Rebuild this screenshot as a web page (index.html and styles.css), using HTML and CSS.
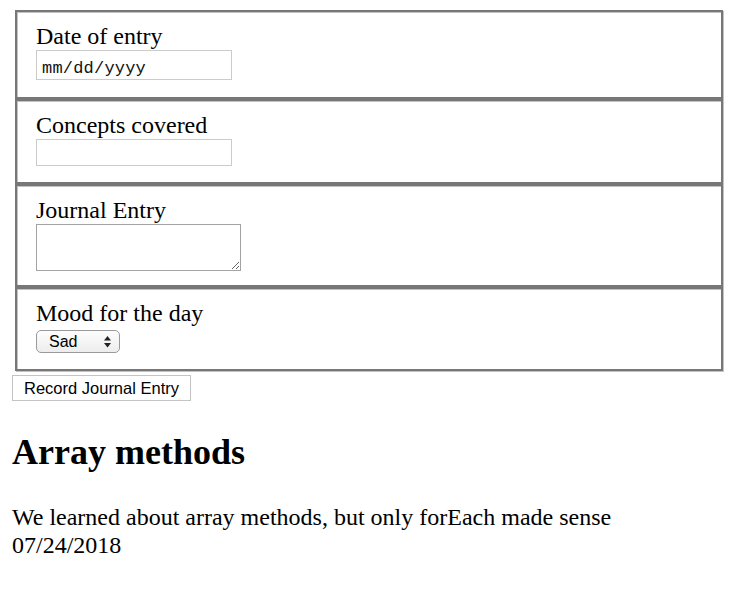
FILE: index.html
```html
<!DOCTYPE html>
<html lang="en">
<head>
<meta charset="utf-8">
<title>Journal</title>
<link rel="stylesheet" href="styles.css">
</head>
<body>
<main class="page">
  <form class="journal">
    <fieldset class="field field-date">
      <label class="field-label" for="entry-date">Date of entry</label>
      <input id="entry-date" class="input input-date" type="text" placeholder="mm/dd/yyyy">
    </fieldset>
    <fieldset class="field">
      <label class="field-label" for="concepts">Concepts covered</label>
      <input id="concepts" class="input input-text" type="text">
    </fieldset>
    <fieldset class="field field-journal">
      <label class="field-label" for="journal-entry">Journal Entry</label>
      <textarea id="journal-entry" class="textarea"></textarea>
    </fieldset>
    <fieldset class="field">
      <label class="field-label" for="mood">Mood for the day</label>
      <span class="select-wrap">
        <select id="mood" class="select">
          <option>Sad</option>
          <option>Happy</option>
          <option>Tired</option>
        </select>
        <svg class="select-arrows" width="7" height="12" viewBox="0 0 7 12" aria-hidden="true">
          <path d="M3.5 0 L7 4.5 L0 4.5 Z" fill="#222"/>
          <path d="M0 7 L7 7 L3.5 11.5 Z" fill="#222"/>
        </svg>
      </span>
    </fieldset>
    <button class="record-btn" type="button">Record Journal Entry</button>
  </form>
  <section class="entries">
    <h2 class="entry-title">Array methods</h2>
    <p class="entry-body">We learned about array methods, but only forEach made sense<br>07/24/2018</p>
  </section>
</main>
</body>
</html>
```

FILE: styles.css
```css
html, body {
  margin: 0;
  padding: 0;
  background: #fff;
}

.page {
  padding: 10px 12px 0;
  font-family: "Liberation Serif", "Times New Roman", serif;
  font-size: 24px;
  color: #000;
}

.journal {
  margin: 0;
}

.field {
  display: flex;
  flex-direction: column;
  align-items: flex-start;
  margin: 0 3px;
  padding: 10px 19px 16px;
  min-width: 0;
  border: 2px solid #777;
  box-shadow: inset 1px 1px 0 #c2c2c2, 1px 1px 0 #c2c2c2;
}

.field-date {
  padding-bottom: 17px;
}

.field-journal {
  padding-bottom: 14px;
}

.field-label {
  display: block;
  line-height: 28px;
  font-size: 24px;
}

.input {
  box-sizing: border-box;
  width: 196px;
  margin: 0;
  border: 1px solid #cbcbcb;
  background: #fff;
  outline: none;
}

.input-date {
  height: 30px;
  padding: 6px 4px 0 5px;
  font-family: "Liberation Mono", "Courier New", monospace;
  font-size: 17px;
  letter-spacing: 0.2px;
  color: #000;
}

.input-date::placeholder {
  color: #111;
  opacity: 1;
}

.input-text {
  height: 27px;
  padding: 2px 4px;
  font-family: "Liberation Sans", Arial, sans-serif;
  font-size: 14px;
}

.textarea {
  box-sizing: border-box;
  display: block;
  width: 205px;
  height: 47px;
  margin: 0;
  padding: 2px;
  border: 1px solid #a3a3a3;
  font-family: "Liberation Mono", monospace;
  font-size: 13px;
  background: #fff;
  outline: none;
}

.select-wrap {
  position: relative;
  display: inline-block;
  margin-top: 3px;
}

.select {
  -webkit-appearance: none;
  appearance: none;
  box-sizing: border-box;
  display: block;
  width: 84px;
  height: 23px;
  margin: 0;
  padding: 0 0 0 12px;
  border: 1px solid #9a9a9a;
  border-radius: 5px;
  background: linear-gradient(#fdfdfd, #ededed);
  font-family: "Liberation Sans", Arial, sans-serif;
  font-size: 16px;
  color: #000;
  outline: none;
}

.select-arrows {
  position: absolute;
  right: 9px;
  top: 6px;
  pointer-events: none;
}

.record-btn {
  display: block;
  box-sizing: border-box;
  width: 179px;
  height: 26px;
  margin: 4px 0 0;
  padding: 3px 0;
  border: 1px solid #c4c4c4;
  background: #fff;
  font-family: "Liberation Sans", Arial, sans-serif;
  font-size: 16.5px;
  line-height: 18px;
  text-align: center;
  color: #000;
}

.entries {
  margin: 0;
}

.entry-title {
  margin: 31px 0 30px;
  font-size: 36px;
  font-weight: bold;
  line-height: 41px;
}

.entry-body {
  margin: 0;
  line-height: 28px;
}
```
